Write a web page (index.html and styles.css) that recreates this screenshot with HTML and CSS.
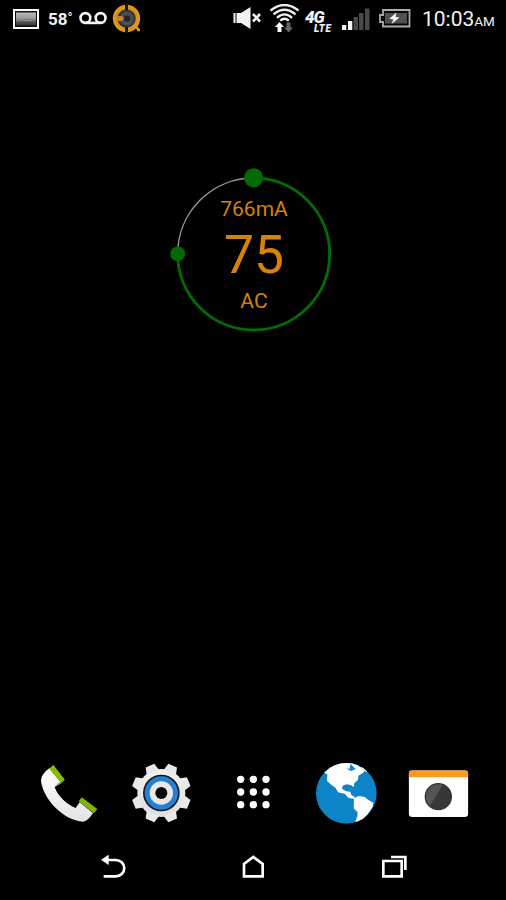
FILE: index.html
```html
<!DOCTYPE html>
<html lang="en">
<head>
<meta charset="utf-8">
<title>Home screen</title>
<link rel="stylesheet" href="styles.css">
</head>
<body>
<div class="phone">
  <header class="status">
    <div class="notices">
      <svg class="photo" width="26" height="20" viewBox="0 0 26 20">
        <defs><linearGradient id="sky" x1="0" y1="0" x2="0" y2="1"><stop offset="0" stop-color="#bbb"/><stop offset=".45" stop-color="#999"/><stop offset=".6" stop-color="#666"/><stop offset="1" stop-color="#333"/></linearGradient></defs>
        <rect x="1" y="1" width="24" height="18" fill="#111" stroke="#fff" stroke-width="2"/>
        <rect x="3" y="3.500" width="20" height="13" fill="url(#sky)"/>
        <path d="M3.200 12C10 9 15 14 23 10" fill="none" stroke="#999"/>
      </svg>
      <span class="temp">58<span class="degree">°</span></span>
      <svg class="voicemail" width="28" height="14" viewBox="0 0 28 14" fill="none" stroke="#f5f5f5" stroke-width="2.600">
        <circle cx="6.400" cy="7" r="4.900"/><circle cx="21.600" cy="7" r="4.900"/><path d="M6.400 11.900H21.600"/>
      </svg>
      <svg class="monitor" width="30" height="30" viewBox="0 0 30 30">
        <circle cx="14.500" cy="14.500" r="11.500" fill="#333538" stroke="#dc9718" stroke-width="4.400"/>
        <path d="M14.500 0V6M14.500 23V29" stroke="#171717" stroke-width="3"/>
        <circle cx="15" cy="14.500" r="7" fill="#484d52"/>
        <circle cx="15" cy="14.500" r="3" fill="#202327"/>
        <path d="M4 12h6l2 2.500-2 2.500H4z" fill="#c98618"/>
        <path d="M23 22l4 4M25 26h3" stroke="#dc9718" stroke-width="2.600"/>
      </svg>
    </div>
    <div class="system">
      <svg class="mute" width="29" height="22" viewBox="0 0 29 22" fill="#f2f2f2">
        <path d="M.5 6H2.500v10H.5zM3.500 6H8.500v10H3.500zM8 6L17.500 0V22L8 16z"/>
        <path d="M20 7l7 7.500M27 7l-7 7.500" stroke="#f2f2f2" stroke-width="2.600"/>
      </svg>
      <svg class="wifi" width="32" height="30" viewBox="0 0 32 30" fill="none" stroke="#eee" stroke-width="2.300">
        <path d="M1.500 6.500Q15.500-4.500 29.500 6.500M4.500 10.300Q15.500 1.200 26.500 10.300M8 13.800Q15.500 7 23 13.800M11.200 16.700Q15.500 12.800 19.800 16.700"/>
        <path d="M10.500 18l4.500 5h-2.500v5h-4v-5h-2.500z" fill="#fff" stroke="none"/>
        <path d="M19.500 28.500l4.500-5h-2.500v-5h-4v5h-2.500z" fill="#666" stroke="none"/>
      </svg>
      <div class="network"><span class="gen">4G</span><span class="lte">LTE</span></div>
      <svg class="signal" width="30" height="23" viewBox="0 0 30 23">
        <path d="M1 17h4.300v5H1zM7 13h4.300v9H7z" fill="#f4f4f4"/>
        <path d="M12.500 9h4.500v13h-4.500zM18 5h4.500v17H18zM24 .5h4.500V22H24z" fill="#494949"/>
      </svg>
      <svg class="battery" width="33" height="19" viewBox="0 0 33 19">
        <path d="M5 1H31.500V17.500H5V13H2V6H5z" fill="#080808" stroke="#aaa" stroke-width="1.800"/>
        <rect x="7" y="4" width="22" height="10.500" fill="#505050"/>
        <path d="M18.500 3.500l-7 6.300 4 .6-2 4.600 8-6.500-4-.4z" fill="#fff"/>
      </svg>
      <div class="clock">10:03<span class="ampm">AM</span></div>
    </div>
  </header>

  <main class="desktop">
    <section class="gauge">
      <svg class="dial" width="180" height="180" viewBox="0 0 180 180" fill="none">
        <path d="M12.700 94A76 76 0 0 1 88.700 18" stroke="#929292" stroke-width="1.500"/>
        <path d="M88.700 18A76 76 0 1 1 12.700 94" stroke="#046b04" stroke-width="3"/>
        <circle cx="88.600" cy="17.800" r="9.600" fill="#046b04"/>
        <circle cx="12.700" cy="93.800" r="7.400" fill="#046b04"/>
      </svg>
      <div class="readout">
        <span class="current">766mA</span>
        <span class="level">75</span>
        <span class="source">AC</span>
      </div>
    </section>
  </main>

  <nav class="dock">
    <svg width="90" height="75" viewBox="-20 0 270 225">
      <defs><linearGradient id="handset" x1="0" y1="0" x2="0" y2="1"><stop offset="0" stop-color="#fff"/><stop offset="1" stop-color="#e4e4e4"/></linearGradient></defs>
      <path d="M60 39Q33 58 34 77C40 133 102 196 160 200Q174 199 190 174L150 142L138 159C112 149 83 122 75 96L95 84z" fill="url(#handset)"/>
      <path d="M59 41L71 30L105 74L95 84L75 94L92 80z" fill="#75a800"/>
      <path d="M59 41L71 30L105 74L94 83z" fill="#8abc04"/>
      <path d="M147 139L156 127L203 162L193 175z" fill="#82b506"/>
    </svg>
    <svg width="90" height="75" viewBox="-13 0 270 225">
      <defs><linearGradient id="metal" x1="0" y1="0" x2="0" y2="1"><stop offset="0" stop-color="#f2f2f2"/><stop offset="1" stop-color="#dedede"/></linearGradient></defs>
      <g transform="translate(123 114)" fill="url(#metal)">
        <circle r="72"/>
        <g id="teeth" fill="#e9e9e9">
          <path d="M-20-66L-14-89H14L20-66z" transform="rotate(22.500)"/>
          <path d="M-20-66L-14-89H14L20-66z" transform="rotate(67.500)"/>
          <path d="M-20-66L-14-89H14L20-66z" transform="rotate(112.500)"/>
          <path d="M-20-66L-14-89H14L20-66z" transform="rotate(157.500)"/>
        </g>
        <use href="#teeth" transform="rotate(180)"/>
        <circle r="55" fill="#121b25"/><circle r="50" fill="#267fd0"/>
        <circle r="35" fill="#e8e8e8"/><circle r="18" fill="#080808"/>
      </g>
    </svg>
    <svg width="90" height="75" viewBox="-35 0 270 225" fill="#fff">
      <circle cx="63" cy="73" r="11"/><circle cx="101" cy="73" r="11"/><circle cx="139" cy="73" r="11"/>
      <circle cx="63" cy="111" r="11"/><circle cx="101" cy="111" r="11"/><circle cx="139" cy="111" r="11"/>
      <circle cx="63" cy="149" r="11"/><circle cx="101" cy="149" r="11"/><circle cx="139" cy="149" r="11"/>
    </svg>
    <svg width="90" height="75" viewBox="-16 0 270 225">
      <defs><clipPath id="earth"><circle cx="123" cy="115" r="91"/></clipPath></defs>
      <circle cx="123" cy="115" r="91" fill="#0d84c8"/>
      <g clip-path="url(#earth)" fill="#fff">
        <path d="M50 50L66 58L65 78L78 89L91 99L98 112L118 116L129 128L145 132L148 125L138 120L135 110L122 109L110 101L112 92L123 88L136 90L145 96L147 85L158 74L159 62L174 53L177 47L166 38L145 20H90z"/>
        <path d="M146 130L160 123L178 126L188 134L204 143L202 155L185 180L158 210L149 203L156 184L157 172L145 160z"/>
        <path d="M121 40L132 42L136 27L151 43L137 48z" fill="#0d84c8"/>
        <path d="M163 39L183 51L189 43L172 34z"/>
      </g>
    </svg>
    <svg width="90" height="75" viewBox="-21 0 270 225">
      <defs>
        <linearGradient id="lens" x1="0" y1="0" x2="1" y2=".6"><stop offset=".5" stop-color="#555"/><stop offset=".51" stop-color="#373737"/></linearGradient>
        <clipPath id="case"><rect x="26" y="46" width="179" height="140" rx="11"/></clipPath>
      </defs>
      <g clip-path="url(#case)"><path d="M26 46H205V186H26z" fill="#fff"/><path d="M26 46H205V67H26z" fill="#f99b22"/></g>
      <circle cx="115" cy="125" r="39" fill="url(#lens)" stroke="#333" stroke-width="4"/>
    </svg>
  </nav>

  <footer class="keys">
    <svg width="60" height="50" viewBox="-23 0 180 150" fill="none" stroke="#fff" stroke-width="8">
      <path d="M48 45H76C113 45 113 94 76 94H42"/><path d="M34 44L57 29V60z" fill="#fff" stroke="none"/>
    </svg>
    <svg width="60" height="50" viewBox="400 0 180 150" fill="none" stroke="#fff" stroke-width="8">
      <path d="M463 94V57L491 36L519 57V94z"/>
    </svg>
    <svg width="60" height="50" viewBox="822 0 180 150" fill="none" stroke="#fff" stroke-width="8">
      <path d="M880 48H935V94H880zM903 36H946V75"/>
    </svg>
  </footer>
</div>
</body>
</html>
```

FILE: styles.css
```css
* { box-sizing: border-box; }

body {
  margin: 0;
  background: #000;
  font-family: Roboto, sans-serif;
}

.phone {
  display: flex;
  flex-direction: column;
  width: 506px;
  height: 900px;
  background: #000;
  overflow: hidden;
}

svg { display: block; flex: none; }

/* Status bar */
.status {
  display: flex;
  justify-content: space-between;
  height: 38px;
  padding: 0 11px 0 13px;
  color: #f2f2f2;
}

.notices, .system { display: flex; align-items: flex-start; }

.photo { margin-top: 9px; }

.temp {
  display: flex;
  width: 32px;
  margin: 9px 0 0 9px;
  font-size: 17px;
  font-weight: 700;
  line-height: 20px;
}

.degree { font-size: 13px; line-height: 17px; }

.voicemail { margin: 11px 0 0 -1px; }
.monitor { margin: 4px 0 0 5px; }

.mute { margin: 7px 7px 0 0; }
.wifi { margin: 4px 4px 0 0; }

.network {
  display: flex;
  flex-direction: column;
  width: 31px;
  margin: 9px 5px 0 0;
  font-style: italic;
  font-weight: 900;
}

.gen {
  font-size: 17px;
  line-height: 16px;
  letter-spacing: -1px;
}

.lte {
  padding-left: 9px;
  font-size: 10px;
  line-height: 8px;
  letter-spacing: 0.5px;
}

.signal { margin: 8px 7px 0 0; }
.battery { margin: 9px 11px 0 0; }

.clock {
  width: 73px;
  margin-top: 7px;
  font-size: 21px;
  line-height: 25px;
  white-space: nowrap;
}

.ampm { font-size: 13.5px; }

/* Battery widget */
.desktop {
  display: flex;
  flex: 1;
  align-items: flex-start;
  padding: 122px 0 0 165px;
}

.gauge { display: grid; }
.dial, .readout { grid-area: 1 / 1; }

.readout {
  display: flex;
  flex-direction: column;
  align-items: center;
  width: 178px;
  padding-top: 36px;
  color: #d58308;
}

.current, .source { font-size: 21px; line-height: 26px; }
.level { font-size: 53.5px; line-height: 66px; }

/* Launcher */
.dock {
  display: grid;
  grid-template-columns: repeat(5, 1fr);
  justify-items: center;
  height: 90px;
  padding: 0 22px;
}

.keys {
  display: grid;
  grid-template-columns: repeat(3, 1fr);
  justify-items: center;
  height: 55px;
  padding: 0 42px;
}
```
